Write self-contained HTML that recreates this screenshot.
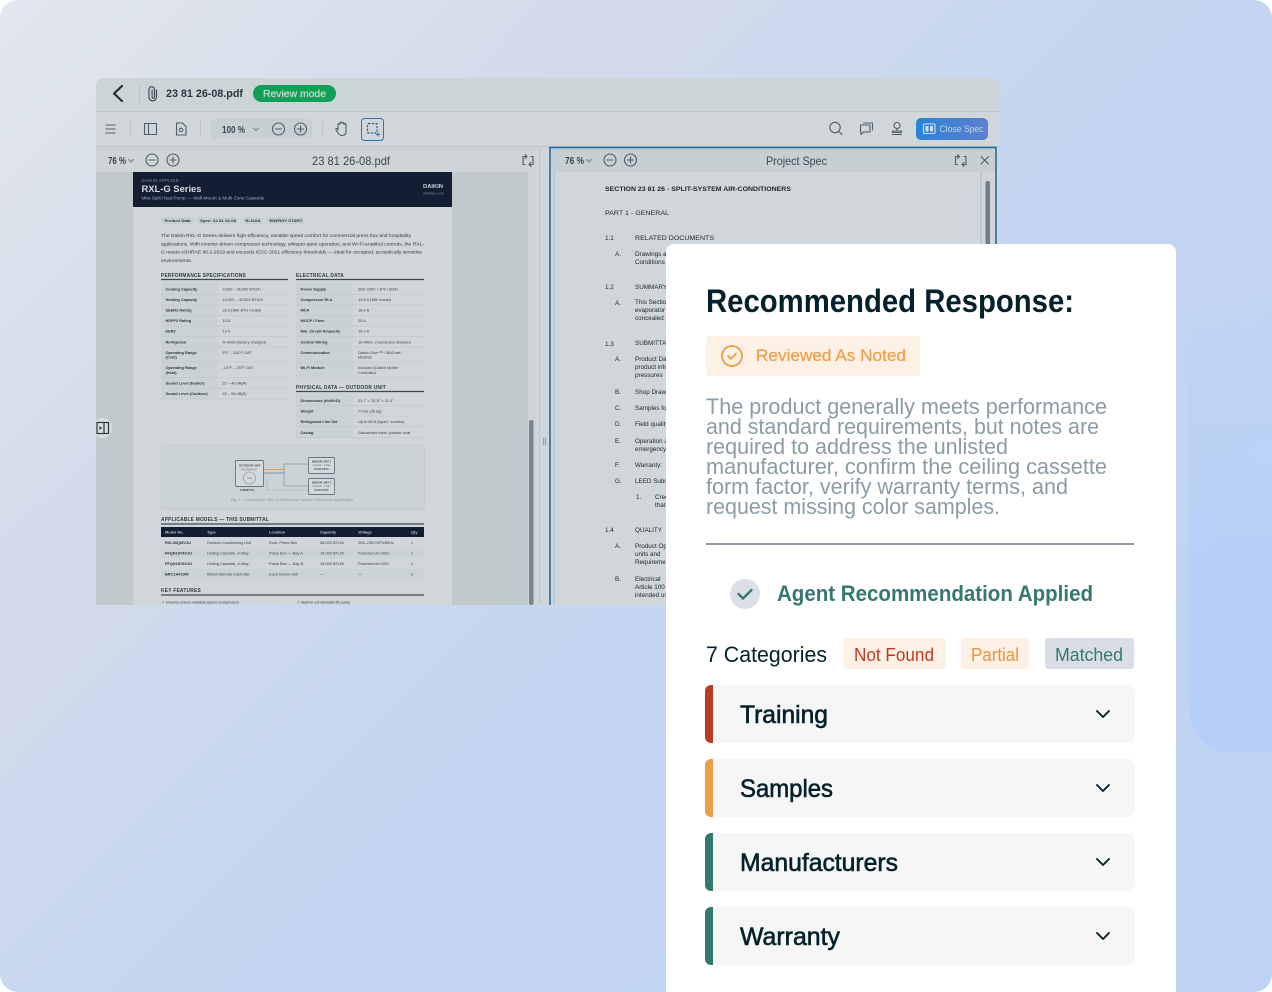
<!DOCTYPE html>
<html><head><meta charset="utf-8"><title>Recommended Response</title>
<style>
html,body{margin:0;padding:0;width:1272px;height:992px;overflow:hidden;background:#fff}
#bg{position:absolute;left:0;top:0;width:1272px;height:992px;border-radius:18px;overflow:hidden;background:linear-gradient(135deg,#e2e6ed 0%,#d2dbeb 28%,#c4d5f1 55%,#bdd2f4 100%)}
svg{position:absolute;left:0;top:0;display:block}
text{font-family:"Liberation Sans",sans-serif}
.d text{fill:#2f393f}
.b{font-weight:700}
.s{font-size:3.9px;fill:#39434a}
.l{font-size:3.9px;font-weight:700;fill:#2c363d}
.h{font-size:5px;font-weight:700;fill:#1e272d;letter-spacing:.25px}
.r{font-size:6.3px;fill:#20282d}
.ic{fill:none;stroke:#4f5d66;stroke-width:1.1;stroke-linecap:round;stroke-linejoin:round}
.g{stroke:#75828a}
.soft{filter:blur(.3px)}
</style></head><body>
<div id="bg"></div>
<svg width="1272" height="992" viewBox="0 0 1272 992">
<defs>
<linearGradient id="blob" x1="0" y1="0" x2="0" y2="1"><stop offset="0" stop-color="#b5cff9" stop-opacity="0"/><stop offset=".55" stop-color="#b5cff9" stop-opacity=".7"/><stop offset="1" stop-color="#b5cff9"/></linearGradient>
<linearGradient id="cs" x1="0" x2="1"><stop offset="0" stop-color="#2a82d9"/><stop offset="1" stop-color="#5d80cd"/></linearGradient>
<clipPath id="win"><path d="M96 605V86a8 8 0 0 1 8-8H992a8 8 0 0 1 8 8V605z"/></clipPath>
<clipPath id="pg"><rect x="133" y="172" width="319" height="433"/></clipPath>
</defs>
<path d="M1272 290V753H1232Q1188 753 1188 690V290z" fill="url(#blob)"/>

<g clip-path="url(#win)"><g class="soft">
<rect x="96" y="78" width="904" height="527" fill="#cfd5d8"/>
<rect x="96" y="78" width="904" height="33" fill="#cdd4d6"/>
<rect x="96" y="111" width="904" height="1" fill="#c2c9cb"/>
<rect x="96" y="112" width="904" height="34" fill="#d0d6d9"/>
<rect x="96" y="146" width="904" height="1" fill="#c0c7ca"/>

<polyline points="122,86 114,93.500 122,101" fill="none" stroke="#1f2d3a" stroke-width="2.200" stroke-linecap="round" stroke-linejoin="round"/>
<rect x="139" y="83" width="1" height="21" fill="#bcc4c7"/>
<path d="M156.500 90v7a3.800 3.800 0 0 1-7.600 0V89.500a2.800 2.800 0 0 1 5.600 0v7.500a1.200 1.200 0 0 1-2.400 0v-7" fill="none" stroke="#36434d" stroke-width="1.100" stroke-linecap="round"/>
<text x="166" y="97" font-size="11" class="b" fill="#2a3640" textLength="77" lengthAdjust="spacingAndGlyphs">23 81 26-08.pdf</text>
<rect x="253" y="85" width="83" height="17" rx="8.500" fill="#0f9f55"/>
<text x="263" y="97" font-size="10" fill="#c5dccf" stroke="#c5dccf" stroke-width=".25" textLength="63" lengthAdjust="spacingAndGlyphs">Review mode</text>

<path d="M105.500 125h10M105.500 129h10M105.500 133h10" stroke="#55636c" stroke-width="1.100"/>
<rect x="130" y="121" width="1" height="15" fill="#bcc4c7"/>
<rect x="144.500" y="123.500" width="12" height="11" class="ic"/><path d="M148.500 123.500v11" class="ic"/>
<path d="M176.500 123h6l3.500 3.500v8.500h-9.500z" class="ic"/><circle cx="181" cy="130" r="1.800" class="ic"/>
<rect x="200" y="121" width="1" height="15" fill="#bcc4c7"/>
<rect x="211" y="119" width="101" height="19" rx="3" fill="#c8cfd2"/>
<text x="222" y="133" font-size="10" class="b" fill="#3b4750" textLength="23" lengthAdjust="spacingAndGlyphs">100 %</text>
<polyline points="253.500,128 256,130.500 258.500,128" class="ic g"/>
<circle cx="278.500" cy="129" r="6" class="ic"/><path d="M275.500 129h6" class="ic"/>
<circle cx="300.500" cy="129" r="6" class="ic"/><path d="M297.500 129h6M300.500 126v6" class="ic"/>
<rect x="322" y="121" width="1" height="15" fill="#c0c7ca"/>
<path d="M338 129.500v-5a1 1 0 0 1 2 0v-1.500a1 1 0 0 1 2 0v0.500a1 1 0 0 1 2 0v1a1 1 0 0 1 2 0v7c0 2.500-1.500 4-4 4-2 0-3-1-4-2.500l-2-3.300c-.6-1 .8-1.800 1.500-.8z" class="ic"/>
<rect x="361.500" y="118.500" width="22" height="22" rx="3" fill="none" stroke="#2a74b8" stroke-width="1"/>
<rect x="367.500" y="123.500" width="9.500" height="9.500" rx="1" fill="none" stroke="#25507e" stroke-width="1.200" stroke-dasharray="2 1.500"/>
<path d="M376 134.500h4M378 132.500v4" stroke="#2a74b8" stroke-width="1"/>

<circle cx="835" cy="127.500" r="5.200" class="ic"/><path d="M839 131.500l3 3" class="ic"/>
<path d="M860.500 125h9.500v7h-6.500l-2.500 2.500v-2.500h-.5z" class="ic"/><path d="M863.500 123h9v7" class="ic"/>
<circle cx="897" cy="125.500" r="3" class="ic"/><path d="M897 128.500v2M892.500 131h9v1.500h-9zM892.500 134.500h9" class="ic"/>
<rect x="916" y="118" width="72" height="22" rx="5" fill="url(#cs)"/>
<rect x="923.500" y="124" width="11.500" height="9.500" rx="1" fill="none" stroke="#cfe0f4" stroke-width="1.100"/><rect x="925.500" y="126" width="3" height="5.500" fill="#cfe0f4"/><rect x="930" y="126" width="3" height="5.500" fill="#cfe0f4"/>
<text x="939.500" y="132" font-size="9.500" fill="#c5d6ec" textLength="44" lengthAdjust="spacingAndGlyphs">Close Spec</text>

<!-- left pane -->
<rect x="96" y="147" width="440" height="25" fill="#ced4d7"/>
<rect x="96" y="172" width="432" height="433" fill="#c2c9cc"/>
<rect x="528" y="172" width="8" height="433" fill="#cdd3d6"/>
<rect x="529" y="420" width="4.500" height="185" rx="2" fill="#78868e"/>
<rect x="539" y="147" width="1" height="458" fill="#bec5c8"/>
<text x="108" y="164" font-size="10" fill="#39454e" class="b" textLength="18" lengthAdjust="spacingAndGlyphs">76 %</text>
<polyline points="128.500,159.500 131,162 133.500,159.500" class="ic g"/>
<circle cx="152" cy="160" r="6" class="ic"/><path d="M149 160h6" class="ic"/>
<circle cx="173" cy="160" r="6" class="ic"/><path d="M170 160h6M173 157v6" class="ic"/>
<text x="312" y="165" font-size="12" fill="#3b4750" textLength="78" lengthAdjust="spacingAndGlyphs">23 81 26-08.pdf</text>
<path d="M526 156.500h-3v8h2M530 164.500h3v-8h-2M525 154.500l2 2-2 2M531 162.500l-2 2 2 2" class="ic"/>

<g clip-path="url(#pg)">
<rect x="133" y="172" width="319" height="433" fill="#d0d6da"/>
<rect x="133" y="172" width="319" height="35" fill="#131e33"/>
<text x="141.500" y="182" font-size="4.200" fill="#8a929e" letter-spacing=".35">DAIKIN APPLIED</text>
<text x="141.500" y="192" font-size="9" class="b" fill="#d6dbe0" textLength="60" lengthAdjust="spacingAndGlyphs">RXL-G Series</text>
<text x="141.500" y="199.500" font-size="4.200" fill="#a3abb4" textLength="123" lengthAdjust="spacingAndGlyphs">Mini-Split Heat Pump — Wall-Mount &amp; Multi-Zone Cassette</text>
<text x="423" y="188" font-size="5.200" class="b" fill="#c9ced4" textLength="20" lengthAdjust="spacingAndGlyphs">DAIKIN</text>
<text x="423" y="194.500" font-size="3.600" fill="#78818c" textLength="21" lengthAdjust="spacingAndGlyphs">daikinac.com</text>
<g fill="#c6ced0">
<rect x="161" y="217" width="33" height="7" rx="3"/><rect x="197" y="217" width="41" height="7" rx="3"/><rect x="243" y="217" width="20" height="7" rx="3"/><rect x="266" y="217" width="39" height="7" rx="3"/></g>
<g class="d">
<text x="164.500" y="222" class="l" textLength="26" lengthAdjust="spacingAndGlyphs">Product Data</text>
<text x="200" y="222" class="l" textLength="36" lengthAdjust="spacingAndGlyphs">Spec: 23 81 26-08</text>
<text x="245.500" y="222" class="l" textLength="15" lengthAdjust="spacingAndGlyphs">R-410A</text>
<text x="269.500" y="222" class="l" textLength="33" lengthAdjust="spacingAndGlyphs">ENERGY STAR®</text>
<text x="161" y="237" class="s" style="font-size:4.700px" textLength="250" lengthAdjust="spacingAndGlyphs">The Daikin RXL-G Series delivers high-efficiency, variable-speed comfort for commercial press box and hospitality</text>
<text x="161" y="245.500" class="s" style="font-size:4.700px" textLength="263" lengthAdjust="spacingAndGlyphs">applications. With inverter-driven compressor technology, whisper-quiet operation, and Wi-Fi-enabled controls, the RXL-</text>
<text x="161" y="253.500" class="s" style="font-size:4.700px" textLength="261" lengthAdjust="spacingAndGlyphs">G meets ASHRAE 90.1-2019 and exceeds IECC 2021 efficiency thresholds — ideal for occupied, acoustically sensitive</text>
<text x="161" y="262" class="s" style="font-size:4.700px" textLength="31" lengthAdjust="spacingAndGlyphs">environments.</text>
<text x="161" y="277" class="h" textLength="85" lengthAdjust="spacingAndGlyphs">PERFORMANCE SPECIFICATIONS</text>
<text x="296" y="277" class="h" textLength="48" lengthAdjust="spacingAndGlyphs">ELECTRICAL DATA</text>
<text x="296" y="389" class="h" textLength="90" lengthAdjust="spacingAndGlyphs">PHYSICAL DATA — OUTDOOR UNIT</text>
<text x="161" y="521" class="h" textLength="108" lengthAdjust="spacingAndGlyphs">APPLICABLE MODELS — THIS SUBMITTAL</text>
<text x="161" y="592" class="h" textLength="40" lengthAdjust="spacingAndGlyphs">KEY FEATURES</text>
</g>
<path d="M161 279.500h127M296 279.500h128M296 391.500h128M161 524h263M161 595h263" stroke="#3e494f" stroke-width="1.200"/>
<!-- perf table -->
<rect x="161" y="281" width="127" height="118" fill="#cbd2d5"/><rect x="218" y="281" width="70" height="118" fill="#d0d6d9"/>
<rect x="296" y="281" width="128" height="97" fill="#cbd2d5"/><rect x="353" y="281" width="71" height="97" fill="#d0d6d9"/>
<rect x="296" y="393" width="128" height="45" fill="#cbd2d5"/><rect x="353" y="393" width="71" height="45" fill="#d0d6d9"/>
<path d="M161 294.500h127M161 305h127M161 315.500h127M161 326h127M161 336.500h127M161 347h127M161 362h127M161 377.500h127M161 388.500h127M161 399h127M296 294.500h128M296 305h128M296 315.500h128M296 326h128M296 336.500h128M296 347h128M296 362h128M296 378h128M296 405.500h128M296 416h128M296 426.500h128M296 437.500h128" stroke="#c2c9cc" stroke-width=".7"/>
<g>
<text x="165.500" y="290.500" class="l">Cooling Capacity</text><text x="222.500" y="290.500" class="s">9,000 – 36,000 BTU/h</text>
<text x="165.500" y="301" class="l">Heating Capacity</text><text x="222.500" y="301" class="s">10,000 – 40,000 BTU/h</text>
<text x="165.500" y="311.500" class="l">SEER2 Rating</text><text x="222.500" y="311.500" class="s">22.0 (36K BTU model)</text>
<text x="165.500" y="322" class="l">HSPF2 Rating</text><text x="222.500" y="322" class="s">10.5</text>
<text x="165.500" y="332.500" class="l">EER2</text><text x="222.500" y="332.500" class="s">13.4</text>
<text x="165.500" y="343.500" class="l">Refrigerant</text><text x="222.500" y="343.500" class="s">R-410A (factory charged)</text>
<text x="165.500" y="354" class="l">Operating Range</text><text x="165.500" y="358.500" class="l">(Cool)</text><text x="222.500" y="354" class="s">5°F – 115°F OAT</text>
<text x="165.500" y="369" class="l">Operating Range</text><text x="165.500" y="374" class="l">(Heat)</text><text x="222.500" y="369" class="s">-13°F – 75°F OAT</text>
<text x="165.500" y="384.500" class="l">Sound Level (Indoor)</text><text x="222.500" y="384.500" class="s">22 – 46 dB(A)</text>
<text x="165.500" y="395" class="l">Sound Level (Outdoor)</text><text x="222.500" y="395" class="s">52 – 58 dB(A)</text>
<text x="300.500" y="290.500" class="l">Power Supply</text><text x="358" y="290.500" class="s">208–230V / 1Ph / 60Hz</text>
<text x="300.500" y="301" class="l">Compressor RLA</text><text x="358" y="301" class="s">14.5 A (36K model)</text>
<text x="300.500" y="311.500" class="l">MCA</text><text x="358" y="311.500" class="s">18.9 A</text>
<text x="300.500" y="322" class="l">MOCP / Fuse</text><text x="358" y="322" class="s">25 A</text>
<text x="300.500" y="332.500" class="l">Min. Circuit Ampacity</text><text x="358" y="332.500" class="s">15.0 A</text>
<text x="300.500" y="343.500" class="l">Control Wiring</text><text x="358" y="343.500" class="s">18 AWG, 2-conductor shielded</text>
<text x="300.500" y="354" class="l">Communication</text><text x="358" y="354" class="s">Daikin One+™ / BACnet /</text><text x="358" y="358.500" class="s">Modbus</text>
<text x="300.500" y="369" class="l">Wi-Fi Module</text><text x="358" y="369" class="s">Included (Daikin Mobile</text><text x="358" y="374" class="s">Controller)</text>
<text x="300.500" y="402" class="l">Dimensions (H×W×D)</text><text x="358" y="402" class="s">21.7" × 31.5" × 11.4"</text>
<text x="300.500" y="412.500" class="l">Weight</text><text x="358" y="412.500" class="s">77 lbs (35 kg)</text>
<text x="300.500" y="423" class="l">Refrigerant Line Set</text><text x="358" y="423" class="s">Up to 65 ft (liquid / suction)</text>
<text x="300.500" y="434" class="l">Casing</text><text x="358" y="434" class="s">Galvanized steel, powder-coat</text>
</g>
<!-- diagram -->
<rect x="161.500" y="445.500" width="263" height="64" rx="2" fill="#cbd3d6" stroke="#c4cbce" stroke-width=".7"/>
<rect x="235.500" y="460.500" width="28" height="26" rx="1" fill="#d3d9dc" stroke="#69757c" stroke-width=".9"/>
<circle cx="249.500" cy="478" r="6" fill="none" stroke="#7f8b92" stroke-width=".6"/>
<rect x="308.500" y="457.500" width="26" height="16" rx="1" fill="#d3d9dc" stroke="#69757c" stroke-width=".9"/>
<rect x="308.500" y="478.500" width="26" height="16" rx="1" fill="#d3d9dc" stroke="#69757c" stroke-width=".9"/>
<path d="M264 469.500h20" stroke="#e09a52" stroke-width="1"/>
<path d="M264 473h20" stroke="#5c80a0" stroke-width=".7"/>
<path d="M284 464v22h24M284 464h24" fill="none" stroke="#8d999f" stroke-width=".8"/>
<path d="M264 480h3v10h41" fill="none" stroke="#a8aca0" stroke-width=".6"/>
<text x="239" y="466.500" font-size="2.800" class="b" fill="#3e494f">OUTDOOR UNIT</text>
<text x="241" y="470.500" font-size="2.400" fill="#626e75">RXL36QMVJU</text>
<text x="249.500" y="479" font-size="2.400" fill="#626e75" text-anchor="middle">FAN</text>
<text x="240" y="491" font-size="2.600" class="b" fill="#3e494f">SUBMITTAL</text>
<text x="321.500" y="462.500" font-size="2.600" class="b" fill="#3e494f" text-anchor="middle">INDOOR UNIT 1</text>
<text x="321.500" y="466" font-size="2.300" fill="#626e75" text-anchor="middle">Cassette · 4-Way</text>
<text x="321.500" y="470" font-size="2.300" class="b" fill="#3e494f" text-anchor="middle">18,000 BTU/h</text>
<text x="321.500" y="483.500" font-size="2.600" class="b" fill="#3e494f" text-anchor="middle">INDOOR UNIT 2</text>
<text x="321.500" y="487" font-size="2.300" fill="#626e75" text-anchor="middle">Cassette · 4-Way</text>
<text x="321.500" y="491" font-size="2.300" class="b" fill="#3e494f" text-anchor="middle">18,000 BTU/h</text>
<text x="292" y="501" font-size="3.600" fill="#8a969c" text-anchor="middle" textLength="122" lengthAdjust="spacingAndGlyphs">Fig. 1 — Schematic: RXL-G Multi-Zone System, Press Box Application</text>
<!-- models -->
<rect x="161" y="527" width="263" height="10" fill="#131e33"/>
<g font-size="3.900" class="b" fill="#bcc4cc">
<text x="165" y="533.500">Model No.</text><text x="207" y="533.500">Type</text><text x="269" y="533.500">Location</text><text x="320" y="533.500">Capacity</text><text x="358" y="533.500">Voltage</text><text x="411" y="533.500">Qty</text></g>
<rect x="161" y="548" width="263" height="10.500" fill="#cbd2d5"/><rect x="161" y="569" width="263" height="10.500" fill="#cbd2d5"/>
<text x="165" y="544" class="l">RXL36QMVJU</text><text x="207" y="544" class="s">Outdoor Condensing Unit</text><text x="269" y="544" class="s">Roof, Press Box</text><text x="320" y="544" class="s">36,000 BTU/h</text><text x="358" y="544" class="s">208–230V/1Ph/60Hz</text><text x="411" y="544" class="s">1</text>
<text x="165" y="554.500" class="l">FFQN18TAVJU</text><text x="207" y="554.500" class="s">Ceiling Cassette, 4-Way</text><text x="269" y="554.500" class="s">Press Box — Bay A</text><text x="320" y="554.500" class="s">18,000 BTU/h</text><text x="358" y="554.500" class="s">Powered via ODU</text><text x="411" y="554.500" class="s">1</text>
<text x="165" y="565" class="l">FFQN18TAVJU</text><text x="207" y="565" class="s">Ceiling Cassette, 4-Way</text><text x="269" y="565" class="s">Press Box — Bay B</text><text x="320" y="565" class="s">18,000 BTU/h</text><text x="358" y="565" class="s">Powered via ODU</text><text x="411" y="565" class="s">1</text>
<text x="165" y="575.500" class="l">BRC1H419W</text><text x="207" y="575.500" class="s">Wired Remote Controller</text><text x="269" y="575.500" class="s">Each Indoor Unit</text><text x="320" y="575.500" class="s">—</text><text x="358" y="575.500" class="s">—</text><text x="411" y="575.500" class="s">2</text>
<text x="161.500" y="603.500" class="s">✓ Inverter-driven variable-speed compressor</text>
<text x="297" y="603.500" class="s">✓ Built-in condensate lift pump</text>
</g>

<circle cx="102" cy="428" r="10" fill="#d8dde0"/>
<rect x="97" y="422.500" width="11.500" height="11" fill="none" stroke="#28353f" stroke-width="1.200"/><path d="M104 422.500v11" stroke="#28353f" stroke-width="1.200"/><path d="M99.500 426l2.500 2-2.500 2z" fill="#28353f"/>
<path d="M543.500 438v7M545.500 438v7" stroke="#818d94" stroke-width=".8"/>

<!-- right pane -->
<rect x="550" y="147.500" width="446" height="470" fill="#cfd5d8" stroke="#1f6ba6" stroke-width="1.600"/>
<rect x="551" y="148.500" width="444" height="24" fill="#c8cfd2"/>
<rect x="555" y="172" width="425" height="433" fill="#d0d6d9"/>
<rect x="553" y="172" width="2" height="433" fill="#c1c8cb"/><rect x="980" y="172" width="1.500" height="433" fill="#bcc3c6"/>
<rect x="985.500" y="181" width="4.500" height="80" rx="2" fill="#6f7d85"/>
<text x="565" y="164" font-size="10" class="b" fill="#39454e" textLength="19" lengthAdjust="spacingAndGlyphs">76 %</text>
<polyline points="586.500,159.500 589,162 591.500,159.500" class="ic g"/>
<circle cx="610" cy="160" r="6" class="ic"/><path d="M607 160h6" class="ic"/>
<circle cx="630.500" cy="160" r="6" class="ic"/><path d="M627.500 160h6M630.500 157v6" class="ic"/>
<text x="766" y="165" font-size="12" fill="#3b4750" textLength="61" lengthAdjust="spacingAndGlyphs">Project Spec</text>
<path d="M958.500 156.500h-3v8h2M963 164.500h3v-8h-2M957.500 154.500l2 2-2 2M964 162.500l-2 2 2 2" class="ic"/>
<path d="M981 156.500l7.500 7.500M988.500 156.500l-7.500 7.500" class="ic"/>

<text x="605" y="191" class="r b" textLength="186" lengthAdjust="spacingAndGlyphs">SECTION 23 81 26 - SPLIT-SYSTEM AIR-CONDITIONERS</text>
<text x="605" y="215" class="r" textLength="64" lengthAdjust="spacingAndGlyphs">PART 1 - GENERAL</text>
<text x="605" y="240" class="r">1.1</text><text x="635" y="240" class="r" textLength="79" lengthAdjust="spacingAndGlyphs">RELATED DOCUMENTS</text>
<text x="615" y="256" class="r">A.</text><text x="635" y="256" class="r">Drawings and general provisions</text><text x="635" y="264" class="r">Conditions and Division 01</text>
<text x="605" y="289" class="r">1.2</text><text x="635" y="289" class="r">SUMMARY</text>
<text x="615" y="305" class="r">A.</text><text x="635" y="304" class="r">This Section includes</text><text x="635" y="312" class="r">evaporator units</text><text x="635" y="320" class="r">concealed piping</text>
<text x="605" y="346" class="r">1.3</text><text x="635" y="345" class="r">SUBMITTALS</text>
<text x="615" y="361" class="r">A.</text><text x="635" y="361" class="r">Product Data</text><text x="635" y="369" class="r">product  information</text><text x="635" y="377" class="r">pressures</text>
<text x="615" y="394" class="r">B.</text><text x="635" y="394" class="r">Shop Drawings</text>
<text x="615" y="410" class="r">C.</text><text x="635" y="410" class="r">Samples for</text>
<text x="615" y="426" class="r">D.</text><text x="635" y="426" class="r">Field quality</text>
<text x="615" y="443" class="r">E.</text><text x="635" y="443" class="r">Operation and</text><text x="635" y="451" class="r">emergency</text>
<text x="615" y="467" class="r">F.</text><text x="635" y="467" class="r">Warranty:</text>
<text x="615" y="483" class="r">G.</text><text x="635" y="483" class="r">LEED Submittals</text>
<text x="636" y="499" class="r">1.</text><text x="655" y="499" class="r">Credit</text><text x="655" y="507" class="r">that</text>
<text x="605" y="532" class="r">1.4</text><text x="635" y="532" class="r">QUALITY</text>
<text x="615" y="548" class="r">A.</text><text x="635" y="548" class="r">Product Options</text><text x="635" y="556" class="r">units  and</text><text x="635" y="564" class="r">Requirements</text>
<text x="615" y="581" class="r">B.</text><text x="635" y="581" class="r">Electrical</text><text x="635" y="589" class="r">Article 100</text><text x="635" y="597" class="r">intended use</text>
</g></g>

<!-- card -->
<path d="M666 992V252a8 8 0 0 1 8-8H1168a8 8 0 0 1 8 8V992z" fill="#fff"/>
<text x="706" y="312" font-size="32" class="b" fill="#03202b" textLength="368" lengthAdjust="spacingAndGlyphs">Recommended Response:</text>
<rect x="706" y="336" width="214" height="40" rx="3" fill="#fdf1e6"/>
<circle cx="732" cy="356" r="10" fill="none" stroke="#f09d46" stroke-width="1.800"/>
<polyline points="728,356 731,359 736,353.500" fill="none" stroke="#f09d46" stroke-width="1.800" stroke-linecap="round" stroke-linejoin="round"/>
<text x="756" y="361" font-size="17" fill="#f09d46" stroke="#f09d46" stroke-width=".2" textLength="150" lengthAdjust="spacingAndGlyphs">Reviewed As Noted</text>
<g font-size="22" fill="#8b9ca4">
<text x="706" y="414" textLength="401" lengthAdjust="spacingAndGlyphs">The product generally meets performance</text>
<text x="706" y="434" textLength="393" lengthAdjust="spacingAndGlyphs">and standard requirements, but notes are</text>
<text x="706" y="454" textLength="302" lengthAdjust="spacingAndGlyphs">required to address the unlisted</text>
<text x="706" y="474" textLength="401" lengthAdjust="spacingAndGlyphs">manufacturer, confirm the ceiling cassette</text>
<text x="706" y="494" textLength="362" lengthAdjust="spacingAndGlyphs">form factor, verify warranty terms, and</text>
<text x="706" y="514" textLength="294" lengthAdjust="spacingAndGlyphs">request missing color samples.</text>
</g>
<rect x="706" y="543" width="428" height="2" fill="#8e9ba7"/>
<circle cx="745" cy="594" r="15" fill="#dbe0e6"/>
<polyline points="738.500,594 743,598.500 751.500,590" fill="none" stroke="#35786e" stroke-width="2.400" stroke-linecap="round" stroke-linejoin="round"/>
<text x="777" y="601" font-size="22" class="b" fill="#35786e" textLength="316" lengthAdjust="spacingAndGlyphs">Agent Recommendation Applied</text>
<text x="706" y="662" font-size="22" fill="#03202b" textLength="121" lengthAdjust="spacingAndGlyphs">7 Categories</text>
<rect x="844" y="638" width="102" height="31" rx="3" fill="#fdf1e6"/>
<text x="854" y="661" font-size="18" fill="#c0391f" textLength="80" lengthAdjust="spacingAndGlyphs">Not Found</text>
<rect x="961" y="638" width="68" height="31" rx="3" fill="#fdf1e6"/>
<text x="971" y="661" font-size="18" fill="#ee9237" textLength="48" lengthAdjust="spacingAndGlyphs">Partial</text>
<rect x="1045" y="638" width="89" height="31" rx="3" fill="#d9dee6"/>
<text x="1055" y="661" font-size="18" fill="#35786e" textLength="68" lengthAdjust="spacingAndGlyphs">Matched</text>

<g>
<rect x="705" y="685" width="430" height="58" rx="8" fill="#f6f6f6"/><path d="M713 685v58h-2a6 6 0 0 1-6-6V691a6 6 0 0 1 6-6z" fill="#bc3a23"/>
<text x="740" y="723" font-size="25" fill="#03202b" stroke="#03202b" stroke-width=".6" textLength="88" lengthAdjust="spacingAndGlyphs">Training</text>
<polyline points="1097,711 1103,717 1109,711" fill="none" stroke="#03202b" stroke-width="1.900" stroke-linecap="round" stroke-linejoin="round"/>
<rect x="705" y="759" width="430" height="58" rx="8" fill="#f6f6f6"/><path d="M713 759v58h-2a6 6 0 0 1-6-6V765a6 6 0 0 1 6-6z" fill="#f09e46"/>
<text x="740" y="797" font-size="25" fill="#03202b" stroke="#03202b" stroke-width=".6" textLength="93" lengthAdjust="spacingAndGlyphs">Samples</text>
<polyline points="1097,785 1103,791 1109,785" fill="none" stroke="#03202b" stroke-width="1.900" stroke-linecap="round" stroke-linejoin="round"/>
<rect x="705" y="833" width="430" height="58" rx="8" fill="#f6f6f6"/><path d="M713 833v58h-2a6 6 0 0 1-6-6V839a6 6 0 0 1 6-6z" fill="#35786e"/>
<text x="740" y="871" font-size="25" fill="#03202b" stroke="#03202b" stroke-width=".6" textLength="158" lengthAdjust="spacingAndGlyphs">Manufacturers</text>
<polyline points="1097,859 1103,865 1109,859" fill="none" stroke="#03202b" stroke-width="1.900" stroke-linecap="round" stroke-linejoin="round"/>
<rect x="705" y="907" width="430" height="58" rx="8" fill="#f6f6f6"/><path d="M713 907v58h-2a6 6 0 0 1-6-6V913a6 6 0 0 1 6-6z" fill="#35786e"/>
<text x="740" y="945" font-size="25" fill="#03202b" stroke="#03202b" stroke-width=".6" textLength="100" lengthAdjust="spacingAndGlyphs">Warranty</text>
<polyline points="1097,933 1103,939 1109,933" fill="none" stroke="#03202b" stroke-width="1.900" stroke-linecap="round" stroke-linejoin="round"/>
</g>
</svg>
</body></html>
